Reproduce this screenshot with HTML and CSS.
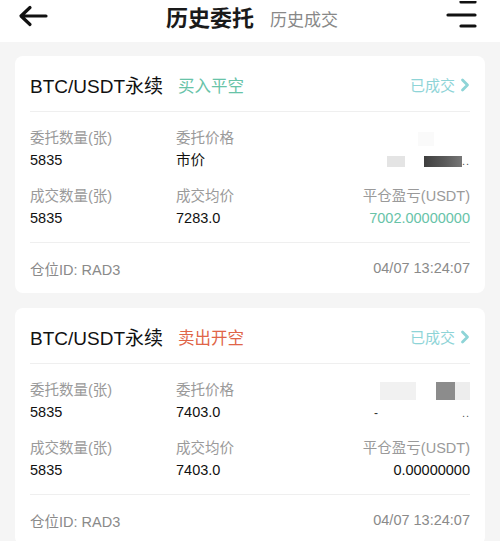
FILE: index.html
```html
<!DOCTYPE html>
<html lang="zh-CN">
<head>
<meta charset="utf-8">
<title>历史委托</title>
<link rel="stylesheet" href="styles.css">
</head>
<body>
<header class="topbar">
  <svg class="back" width="30" height="22" viewBox="0 0 30 22"><path d="M28 11H4M12 2.5L3 11l9 8.5" fill="none" stroke="#111" stroke-width="3.2" stroke-linecap="round" stroke-linejoin="round"/></svg>
  <div class="tabs">
    <span class="tab active">历史委托</span>
    <span class="tab">历史成交</span>
  </div>
  <svg class="menu" width="32" height="28" viewBox="0 0 32 28"><path d="M15 1h14M2 14h27M15 25h14" fill="none" stroke="#111" stroke-width="3.2" stroke-linecap="round"/></svg>
</header>

<main class="list">
  <section class="card">
    <div class="card-head">
      <span class="pair">BTC/USDT永续</span>
      <span class="side buy">买入平空</span>
      <span class="status">已成交<svg class="chev" width="10" height="14" viewBox="0 0 10 14"><path d="M2.5 2l5 5-5 5" fill="none" stroke="#8ed4d7" stroke-width="2.8" stroke-linecap="round" stroke-linejoin="round"/></svg></span>
    </div>
    <div class="card-body">
      <div class="cell"><div class="label">委托数量(张)</div><div class="value">5835</div></div>
      <div class="cell"><div class="label">委托价格</div><div class="value">市价</div></div>
      <div class="cell right"><div class="label"><span class="blur faint"></span></div><div class="value"><span class="blur b1"></span><span class="blur b2"></span><span class="dots">..</span></div></div>
      <div class="cell"><div class="label">成交数量(张)</div><div class="value">5835</div></div>
      <div class="cell"><div class="label">成交均价</div><div class="value">7283.0</div></div>
      <div class="cell right"><div class="label">平仓盈亏(USDT)</div><div class="value green">7002.00000000</div></div>
    </div>
    <div class="card-foot">
      <span>仓位ID: RAD3</span>
      <span>04/07 13:24:07</span>
    </div>
  </section>

  <section class="card">
    <div class="card-head">
      <span class="pair">BTC/USDT永续</span>
      <span class="side sell">卖出开空</span>
      <span class="status">已成交<svg class="chev" width="10" height="14" viewBox="0 0 10 14"><path d="M2.5 2l5 5-5 5" fill="none" stroke="#8ed4d7" stroke-width="2.8" stroke-linecap="round" stroke-linejoin="round"/></svg></span>
    </div>
    <div class="card-body">
      <div class="cell"><div class="label">委托数量(张)</div><div class="value">5835</div></div>
      <div class="cell"><div class="label">委托价格</div><div class="value">7403.0</div></div>
      <div class="cell right"><div class="label"><span class="blur b3"></span><span class="blur b4"></span><span class="blur b5"></span></div><div class="value"><span class="dash">-</span><span class="dots">..</span></div></div>
      <div class="cell"><div class="label">成交数量(张)</div><div class="value">5835</div></div>
      <div class="cell"><div class="label">成交均价</div><div class="value">7403.0</div></div>
      <div class="cell right"><div class="label">平仓盈亏(USDT)</div><div class="value">0.00000000</div></div>
    </div>
    <div class="card-foot">
      <span>仓位ID: RAD3</span>
      <span>04/07 13:24:07</span>
    </div>
  </section>
</main>
</body>
</html>
```

FILE: styles.css
```css
html, body {
  margin: 0;
  padding: 0;
}
body {
  width: 500px;
  height: 541px;
  overflow: hidden;
  background: #f5f5f5;
  font-family: "Liberation Sans", "Noto Sans CJK SC", sans-serif;
  color: #111;
}
.topbar {
  height: 42px;
  background: #fff;
  display: flex;
  align-items: center;
  justify-content: space-between;
  padding: 0 22px 0 18px;
  box-sizing: border-box;
}
.back {
  display: block;
  margin-top: -10px;
}
.menu {
  display: block;
  margin-top: -13px;
}
.tabs {
  display: flex;
  align-items: baseline;
  gap: 16px;
  margin-left: 118px;
  margin-right: auto;
  margin-top: -10px;
}
.tab {
  font-family: "Noto Sans CJK SC", sans-serif;
  font-size: 17px;
  color: #888;
}
.tab.active {
  font-size: 22px;
  font-weight: 700;
  color: #1a1a1a;
}
.list {
  padding: 14px 15px 0;
  display: flex;
  flex-direction: column;
  gap: 15px;
}
.card {
  background: #fff;
  border-radius: 8px;
  padding: 0 15px;
}
.card-head {
  height: 56px;
  display: flex;
  align-items: center;
  border-bottom: 1px solid #efefef;
  box-sizing: border-box;
  padding-top: 2px;
}
.pair {
  font-size: 19px;
  color: #111;
}
.side {
  font-size: 16.5px;
  margin-left: 15px;
}
.side.buy { color: #68c3a8; }
.side.sell { color: #e06548; }
.status {
  margin-left: auto;
  font-size: 15px;
  color: #8ed4d7;
  display: flex;
  align-items: center;
  gap: 5px;
}
.chev { display: block; }
.card-body {
  display: grid;
  grid-template-columns: 146px 1fr auto;
  row-gap: 14px;
  padding: 15px 0 13px;
  border-bottom: 1px solid #efefef;
}
.cell.right { text-align: right; }
.label {
  font-size: 14.5px;
  line-height: 22px;
  height: 22px;
  color: #9a9a9a;
  white-space: nowrap;
}
.value {
  font-size: 14.5px;
  line-height: 22px;
  height: 22px;
  color: #111;
  white-space: nowrap;
}
.value.green { color: #68c3a8; }
.card-foot {
  height: 50px;
  display: flex;
  align-items: center;
  justify-content: space-between;
  font-size: 14.5px;
  color: #8a8a8a;
}
.blur {
  display: inline-block;
  vertical-align: middle;
}
.blur.faint { width: 16px; height: 14px; background: #fafafa; margin-right: 36px; }
.blur.b1 { width: 18px; height: 11px; background: #e4e4e4; margin-right: 19px; }
.blur.b2 { width: 38px; height: 11px; background: linear-gradient(90deg, #3f3f3f, #5a5a5a 55%, #777); }
.blur.b3 { width: 36px; height: 18px; background: #f1f1f1; margin-right: 20px; }
.blur.b4 { width: 19px; height: 18px; background: #8c8c8c; }
.blur.b5 { width: 15px; height: 18px; background: #ededed; }
.dots { font-size: 11px; color: #555; letter-spacing: 1px; }
.dash { font-size: 12px; color: #333; margin-right: 84px; }
```
